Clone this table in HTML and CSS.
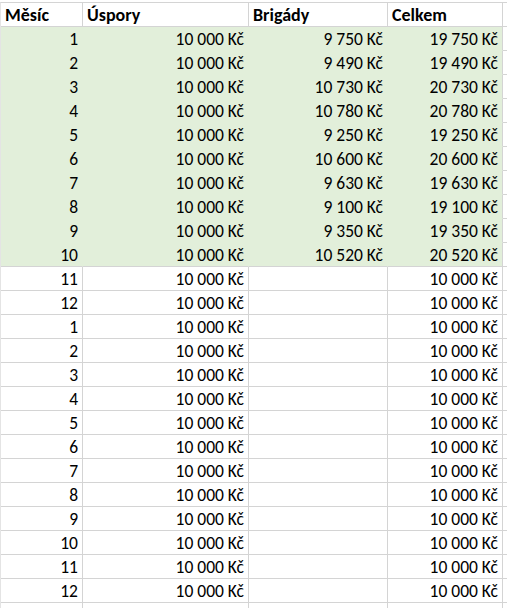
FILE: index.html
```html
<!DOCTYPE html>
<html lang="cs">
<head>
<meta charset="utf-8">
<title>Úspory</title>
<link rel="stylesheet" href="styles.css">
</head>
<body>
<div class="sheet">
  <div class="c h">Měsíc</div><div class="c h">Úspory</div><div class="c h">Brigády</div><div class="c h">Celkem</div><div class="c e"></div>

  <div class="c g n">1</div><div class="c g n">10 000 Kč</div><div class="c g n">9 750 Kč</div><div class="c g n">19 750 Kč</div><div class="c e"></div>
  <div class="c g n">2</div><div class="c g n">10 000 Kč</div><div class="c g n">9 490 Kč</div><div class="c g n">19 490 Kč</div><div class="c e"></div>
  <div class="c g n">3</div><div class="c g n">10 000 Kč</div><div class="c g n">10 730 Kč</div><div class="c g n">20 730 Kč</div><div class="c e"></div>
  <div class="c g n">4</div><div class="c g n">10 000 Kč</div><div class="c g n">10 780 Kč</div><div class="c g n">20 780 Kč</div><div class="c e"></div>
  <div class="c g n">5</div><div class="c g n">10 000 Kč</div><div class="c g n">9 250 Kč</div><div class="c g n">19 250 Kč</div><div class="c e"></div>
  <div class="c g n">6</div><div class="c g n">10 000 Kč</div><div class="c g n">10 600 Kč</div><div class="c g n">20 600 Kč</div><div class="c e"></div>
  <div class="c g n">7</div><div class="c g n">10 000 Kč</div><div class="c g n">9 630 Kč</div><div class="c g n">19 630 Kč</div><div class="c e"></div>
  <div class="c g n">8</div><div class="c g n">10 000 Kč</div><div class="c g n">9 100 Kč</div><div class="c g n">19 100 Kč</div><div class="c e"></div>
  <div class="c g n">9</div><div class="c g n">10 000 Kč</div><div class="c g n">9 350 Kč</div><div class="c g n">19 350 Kč</div><div class="c e"></div>
  <div class="c g gl n">10</div><div class="c g gl n">10 000 Kč</div><div class="c g gl n">10 520 Kč</div><div class="c g gl n">20 520 Kč</div><div class="c e"></div>

  <div class="c n">11</div><div class="c n">10 000 Kč</div><div class="c n"></div><div class="c n">10 000 Kč</div><div class="c e"></div>
  <div class="c n">12</div><div class="c n">10 000 Kč</div><div class="c n"></div><div class="c n">10 000 Kč</div><div class="c e"></div>
  <div class="c n">1</div><div class="c n">10 000 Kč</div><div class="c n"></div><div class="c n">10 000 Kč</div><div class="c e"></div>
  <div class="c n">2</div><div class="c n">10 000 Kč</div><div class="c n"></div><div class="c n">10 000 Kč</div><div class="c e"></div>
  <div class="c n">3</div><div class="c n">10 000 Kč</div><div class="c n"></div><div class="c n">10 000 Kč</div><div class="c e"></div>
  <div class="c n">4</div><div class="c n">10 000 Kč</div><div class="c n"></div><div class="c n">10 000 Kč</div><div class="c e"></div>
  <div class="c n">5</div><div class="c n">10 000 Kč</div><div class="c n"></div><div class="c n">10 000 Kč</div><div class="c e"></div>
  <div class="c n">6</div><div class="c n">10 000 Kč</div><div class="c n"></div><div class="c n">10 000 Kč</div><div class="c e"></div>
  <div class="c n">7</div><div class="c n">10 000 Kč</div><div class="c n"></div><div class="c n">10 000 Kč</div><div class="c e"></div>
  <div class="c n">8</div><div class="c n">10 000 Kč</div><div class="c n"></div><div class="c n">10 000 Kč</div><div class="c e"></div>
  <div class="c n">9</div><div class="c n">10 000 Kč</div><div class="c n"></div><div class="c n">10 000 Kč</div><div class="c e"></div>
  <div class="c n">10</div><div class="c n">10 000 Kč</div><div class="c n"></div><div class="c n">10 000 Kč</div><div class="c e"></div>
  <div class="c n">11</div><div class="c n">10 000 Kč</div><div class="c n"></div><div class="c n">10 000 Kč</div><div class="c e"></div>
  <div class="c n">12</div><div class="c n">10 000 Kč</div><div class="c n"></div><div class="c n">10 000 Kč</div><div class="c e"></div>
  <div class="c n"></div><div class="c n"></div><div class="c n"></div><div class="c n"></div><div class="c e"></div>
</div>
</body>
</html>
```

FILE: styles.css
```css
html, body {
  margin: 0;
  padding: 0;
  background: #ffffff;
  overflow: hidden;
}

.sheet {
  display: grid;
  grid-template-columns: 82px 166px 139px 115px 5px;
  grid-auto-rows: 24px;
  margin-top: 2px;
  border-top: 1px solid #d4d4d4;
  border-left: 1px solid #e4e4e4;
  font-family: Carlito, Calibri, Lato, "Open Sans", sans-serif;
  font-size: 17.5px;
  color: #000000;
}

.c {
  box-sizing: border-box;
  border-right: 1px solid #d4d4d4;
  border-bottom: 1px solid #d4d4d4;
  padding: 0 4px 2px 4px;
  display: flex;
  align-items: flex-end;
  white-space: nowrap;
  line-height: 17px;
}

.h {
  font-weight: 700;
  font-size: 18px;
}

.n {
  justify-content: flex-end;
}

.g {
  background: #e2efda;
  border-color: #e2efda;
}

.g:nth-child(5n+4) {
  border-right-color: #d4d4d4;
}

.gl {
  border-bottom-color: #d4d4d4;
}

.e {
  border-right: none;
}
```
